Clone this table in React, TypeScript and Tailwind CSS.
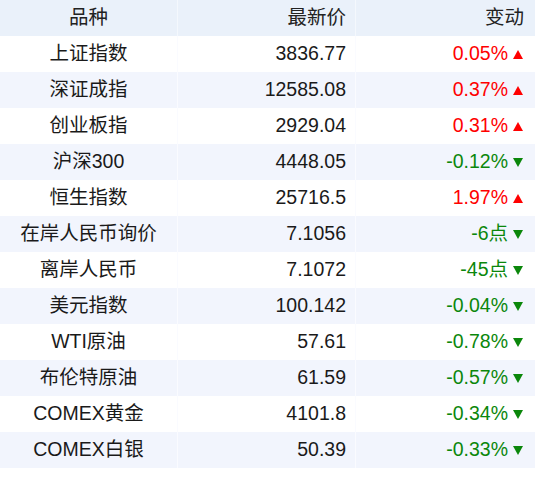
import React from 'react'

type Row = { name: string; price: string; change: string; up: boolean }

const rows: Row[] = [
  { name: '上证指数', price: '3836.77', change: '0.05%', up: true },
  { name: '深证成指', price: '12585.08', change: '0.37%', up: true },
  { name: '创业板指', price: '2929.04', change: '0.31%', up: true },
  { name: '沪深300', price: '4448.05', change: '-0.12%', up: false },
  { name: '恒生指数', price: '25716.5', change: '1.97%', up: true },
  { name: '在岸人民币询价', price: '7.1056', change: '-6点', up: false },
  { name: '离岸人民币', price: '7.1072', change: '-45点', up: false },
  { name: '美元指数', price: '100.142', change: '-0.04%', up: false },
  { name: 'WTI原油', price: '57.61', change: '-0.78%', up: false },
  { name: '布伦特原油', price: '61.59', change: '-0.57%', up: false },
  { name: 'COMEX黄金', price: '4101.8', change: '-0.34%', up: false },
  { name: 'COMEX白银', price: '50.39', change: '-0.33%', up: false }
]

const Arrow = ({ up }: { up: boolean }) => (
  <svg width="10" height="9" viewBox="0 0 10 9" className="ml-[5px] mt-[1px]">
    {up ? (
      <polygon points="5,0 10,9 0,9" fill="#ff0000" />
    ) : (
      <polygon points="0,0 10,0 5,9" fill="#0b870b" />
    )}
  </svg>
)

const App = () => {
  return (
    <div className="w-[535px] bg-white text-[19.5px] text-[#1a1a1a] font-['Liberation_Sans','Noto_Sans_CJK_SC',sans-serif]">
      {/* Header */}
      <div className="grid grid-cols-[178px_178px_179px] h-9 bg-[#eaf1fa] text-[#222]">
        <div className="flex items-center justify-center border-r border-[#f4f8fd]">品种</div>
        <div className="flex items-center justify-end pr-[9px] border-r border-[#f4f8fd]">最新价</div>
        <div className="flex items-center justify-end pr-[11px]">变动</div>
      </div>

      {rows.map((row, index) => (
        <div
          key={index}
          className={`grid grid-cols-[178px_178px_179px] h-9 ${index % 2 === 1 ? 'bg-[#f2f5fd]' : 'bg-white'}`}
        >
          <div className="flex items-center justify-center border-r border-[#fafbff]">{row.name}</div>
          <div className="flex items-center justify-end pr-[9px] border-r border-[#fafbff]">{row.price}</div>
          <div
            className={`flex items-center justify-end pr-[12px] ${row.up ? 'text-[#ff0000]' : 'text-[#0b870b]'}`}
          >
            {row.change}
            <Arrow up={row.up} />
          </div>
        </div>
      ))}
    </div>
  )
}

export default App
